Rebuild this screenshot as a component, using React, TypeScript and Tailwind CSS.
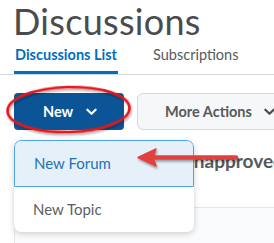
import React from "react"

function Chevron({ className }: { className?: string }) {
  return (
    <svg viewBox="0 0 12 8" className={className} fill="none">
      <path d="M1.5 1.5 6 6l4.5-4.5" stroke="currentColor" strokeWidth="2.4" strokeLinecap="round" strokeLinejoin="round" />
    </svg>
  )
}

export default function App() {
  return (
    <div className="relative w-[274px] h-[243px] overflow-hidden bg-white font-['Lato','Liberation_Sans',sans-serif] text-[#494c4e]">
      <h1 className="pl-[13px] pt-[3px] text-[36px] leading-[36px] font-normal text-[#494c4e] tracking-[0.3px] whitespace-nowrap">Discussions</h1>

      <nav className="flex border-b border-[#d3d9e3] pl-[14px]">
        <div className="flex flex-col">
          <span className="pl-px pt-[6px] text-[14.5px] leading-[20px] font-bold text-[#006fbf]">Discussions List</span>
          <span className="mt-[6px] h-[3px] w-[104px] bg-[#006fbf]" />
        </div>
        <span className="ml-[35px] pt-[6px] text-[14.5px] leading-[20px] text-[#565a5c]">Subscriptions</span>
      </nav>

      <div className="mt-[18px] flex gap-[13px] pl-[14px]">
        <button type="button" className="flex h-[37px] w-[110px] shrink-0 items-center rounded-[4px] bg-[#0b5596] pl-[29px] text-[14.5px] font-bold text-white">
          New
          <Chevron className="ml-[13px] h-[8px] w-[11px] text-white" />
        </button>
        <button type="button" className="flex h-[37px] w-[150px] shrink-0 items-center rounded-[6px] border border-[#d3d9e3] bg-[#f6f7f8] pl-[27px] text-[14.5px] font-bold text-[#565a5c]">
          More Actions
          <Chevron className="ml-[12px] h-[8px] w-[11px] text-[#494c4e]" />
        </button>
      </div>

      <div className="pl-[14px]">
        <div className="pl-[166px] pt-[21px] text-[19px] leading-[20px] font-bold text-[#565a5c] whitespace-nowrap">Unapproved Posts</div>
        <div className="mt-[36px] h-[60px] rounded-tl-[6px] border-l border-t border-[#e3e7ec] bg-[#fafbfc]" />
      </div>

      <div className="absolute left-[14px] top-[140px] z-10 w-[180px] overflow-hidden rounded-[7px] bg-white shadow-[0_2px_6px_rgba(0,0,0,0.18)]">
        <div className="flex h-[47px] items-center rounded-t-[7px] border border-[#4ea4e6] bg-[#e5f0f9] pl-[19px] text-[15px] text-[#1c73b7]">New Forum</div>
        <div className="flex h-[45px] items-center pl-[19px] text-[15px] text-[#5b5f61]">New Topic</div>
      </div>

      <svg className="pointer-events-none absolute left-0 top-0 z-20" width="274" height="243" viewBox="0 0 274 243">
        <defs>
          <filter id="sh" x="-20%" y="-40%" width="140%" height="180%">
            <feDropShadow dx="1" dy="2" stdDeviation="1.3" floodColor="#000" floodOpacity="0.35" />
          </filter>
        </defs>
        <ellipse cx="68.5" cy="109.5" rx="61" ry="22.5" fill="none" stroke="#e3161d" strokeWidth="2.6" transform="rotate(-1.5 68.5 109.5)" filter="url(#sh)" />
        <g filter="url(#sh)">
          <path d="M152 157.5 H236" stroke="#e2403d" strokeWidth="4.5" strokeLinecap="round" />
          <path d="M138 157.5 L156 149 L153 157.5 L156 166 Z" fill="#e2403d" stroke="#e2403d" strokeWidth="1.5" strokeLinejoin="round" />
        </g>
      </svg>
    </div>
  )
}
